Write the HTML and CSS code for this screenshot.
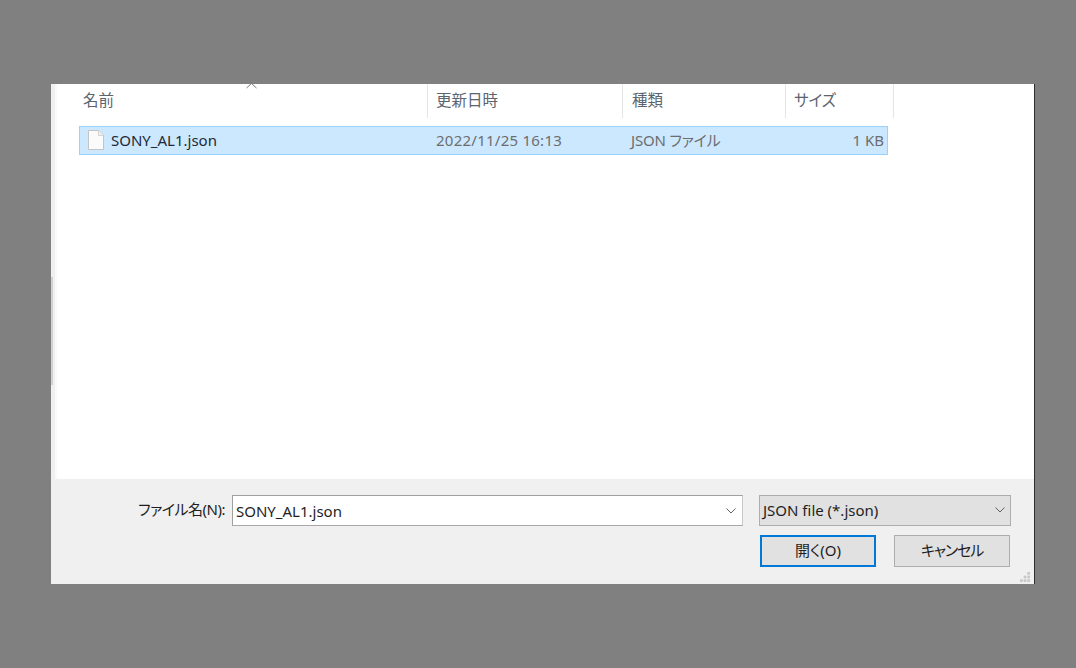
FILE: index.html
```html
<!DOCTYPE html>
<html lang="ja">
<head>
<meta charset="utf-8">
<title>ファイルを開く</title>
<link rel="stylesheet" href="styles.css">
</head>
<body>
<div class="dialog">
  <div class="edge-mark"></div>
  <div class="pane">
    <div class="list">
      <div class="head">
        <div class="col c-name">名前<svg class="sort" width="11" height="6" viewBox="0 0 11 6"><path d="M.5 5 5.500.5l5 4.500" fill="none" stroke="#7a7a7a" stroke-width="1"/></svg></div>
        <div class="col c-date">更新日時</div>
        <div class="col c-type">種類</div>
        <div class="col c-size">サイズ</div>
      </div>
      <div class="row">
        <div class="cell c-name-cell">
          <svg class="file" width="16" height="20" viewBox="0 0 16 20"><path d="M.5.5h10.500l4.500 4.500v14.500h-15z" fill="#fbfbfb" stroke="#c4c4c4"/><path d="M10.500.5v5h5" fill="#f0f0f0" stroke="#d4d4d4"/></svg>
          <span class="fname">SONY_AL1.json</span>
        </div>
        <div class="cell c-date-cell">2022/11/25 16:13</div>
        <div class="cell c-type-cell">JSON ファイル</div>
        <div class="cell c-size-cell">1 KB</div>
      </div>
    </div>
  </div>
  <div class="footer">
    <div class="line-one">
      <label class="label">ファイル名(N):</label>
      <div class="combo">
        <span class="value">SONY_AL1.json</span>
        <svg class="chev" width="10" height="6" viewBox="0 0 10 6"><path d="M.5.5 5 5 9.500.5" fill="none" stroke="#606060"/></svg>
      </div>
      <div class="filter">
        <span>JSON file (*.json)</span>
        <svg class="chev" width="10" height="6" viewBox="0 0 10 6"><path d="M.5.5 5 5 9.500.5" fill="none" stroke="#606060"/></svg>
      </div>
    </div>
    <div class="line-two">
      <button class="btn primary">開く(O)</button>
      <button class="btn cancel">キャンセル</button>
    </div>
    <svg class="grip" width="10" height="10" viewBox="0 0 11 11" fill="#c8c8c8"><rect x="8" y="0" width="3" height="3"/><rect x="4" y="4" width="3" height="3"/><rect x="8" y="4" width="3" height="3"/><rect x="0" y="8" width="3" height="3"/><rect x="4" y="8" width="3" height="3"/><rect x="8" y="8" width="3" height="3"/></svg>
  </div>
</div>
</body>
</html>
```
FILE: styles.css
```css
* { box-sizing: border-box; }
html, body { margin: 0; height: 100%; }
body {
  width: 1076px;
  height: 668px;
  overflow: hidden;
  background: #808080;
  padding: 84px 0 0 51px;
  font-family: "Noto Sans", "Noto Sans CJK JP", sans-serif;
  font-size: 15px;
  line-height: 20px;
  font-feature-settings: "palt";
  color: #1e1e1e;
}
.dialog {
  width: 984px;
  height: 500px;
  border-right: 1px solid #2e2e2e;
  background: #f0f0f0;
  display: flex;
  flex-direction: column;
  position: relative;
}
.edge-mark {
  position: absolute;
  left: 0;
  top: 193px;
  width: 2px;
  height: 108px;
  background: #d2d2d2;
}
.pane {
  height: 395px;
  margin-left: 4px;
  background: #fff;
  border-left: 2px solid #fafafa;
  padding-left: 22px;
}
.head {
  display: flex;
  height: 34px;
  color: #5a6470;
  font-size: 15.5px;
}
.col {
  border-right: 1px solid #e5e5e5;
  padding: 6px 0 0 8px;
  position: relative;
}
.c-name { width: 349px; padding-left: 4px; }
.c-date { width: 195px; }
.c-type { width: 163px; padding-left: 9px; }
.c-size { width: 108px; }
.sort { position: absolute; left: 167px; top: -1px; }
.row {
  display: flex;
  align-items: center;
  width: 809px;
  height: 29px;
  margin-top: 8px;
  background: #cce8ff;
  border: 1px solid #99d1ff;
  color: #6d6d6d;
  padding-bottom: 1px;
}
.cell { white-space: nowrap; }
.c-name-cell { width: 348px; display: flex; align-items: center; padding-left: 8px; color: #1e2a38; }
.file { margin-right: 7px; }
.c-date-cell { width: 195px; padding-left: 8px; letter-spacing: .25px; }
.c-type-cell { width: 163px; padding-left: 8px; letter-spacing: -.2px; }
.c-size-cell { flex: 1; text-align: right; padding-right: 3px; }
.footer {
  flex: 1;
  padding: 16px 23px 0 87px;
  position: relative;
}
.line-one { display: flex; align-items: flex-start; }
.label {
  width: 87px;
  padding-top: 4px;
  margin-right: 7px;
  text-align: right;
  white-space: nowrap;
  letter-spacing: -.5px;
}
.combo {
  width: 511px;
  height: 31px;
  background: #fff;
  border: 1px solid #a0a0a0;
  border-right-color: #c8c8c8;
  border-bottom-color: #a8a8a8;
  display: flex;
  align-items: center;
  justify-content: space-between;
  padding: 0 6px 0 3px;
}
.filter {
  width: 252px;
  height: 31px;
  margin-left: 16px;
  background: #e1e1e1;
  border: 1px solid #adadad;
  display: flex;
  align-items: center;
  justify-content: space-between;
  padding: 0 5px 2px 3px;
}
.chev { flex: none; }
.line-two {
  display: flex;
  gap: 18px;
  margin: 9px 0 0 622px;
}
.btn {
  width: 116px;
  height: 32px;
  background: #e1e1e1;
  border: 1px solid #adadad;
  font: inherit;
  color: #1e1e1e;
  padding: 0 0 2px;
}
.cancel { letter-spacing: -1.2px; }
.primary { border: 2px solid #0078d7; }
.grip { position: absolute; right: 4px; bottom: 2px; }
```
